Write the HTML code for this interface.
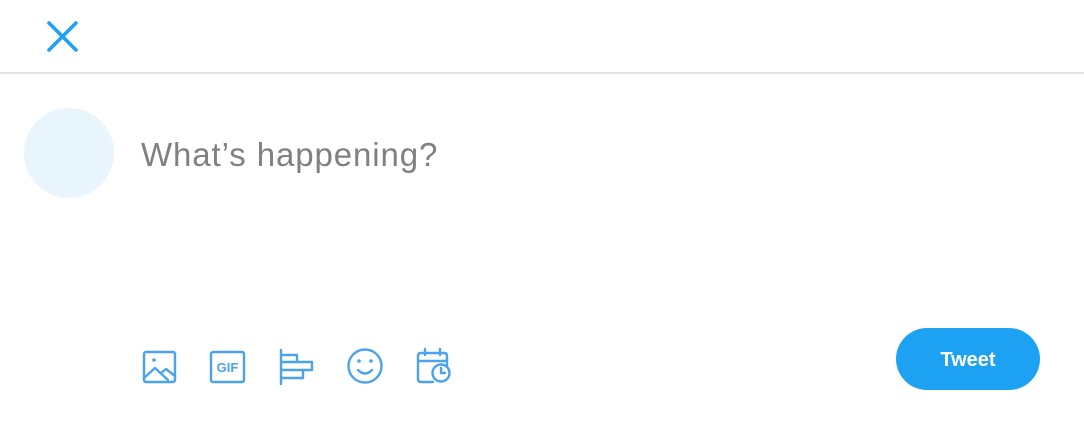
<!DOCTYPE html>
<html><head><style>
body{margin:0;width:1084px;height:428px;background:#fff;position:relative;overflow:hidden;font-family:"Liberation Sans",sans-serif}
.abs{position:absolute}
</style></head><body>
<svg class="abs" style="left:0;top:0" width="1084" height="428">
<path d="M49 23L76 50M76 23L49 50" stroke="#1da1f2" stroke-width="3.6" stroke-linecap="round"/>
<rect x="0" y="72" width="1084" height="2" fill="#e3e3e3"/>
<circle cx="69" cy="153" r="45" fill="#e8f5fd"/>
<g fill="none" stroke="#4aa3ec" stroke-width="2.4" stroke-linecap="round" stroke-linejoin="round">
<rect x="144" y="352" width="31" height="30" rx="2"/>
<circle cx="154" cy="360" r="1.8" fill="#4aa3ec" stroke="none"/>
<path d="M144 378L155 368L168 380M161 373L166 369L175 376"/>
<rect x="211" y="352" width="33" height="30" rx="2"/>
<path d="M281 350V384M281 355H297V362H281M281 362H312V370H281M281 370H303V378H281"/>
<circle cx="365" cy="366" r="16.5"/>
<path d="M358 370Q365 377 372 370"/>
<path d="M433 382H421Q418 382 418 379V356Q418 353 421 353H444Q447 353 447 356V366M418 361H447M425 349V355M440 349V355"/>
<circle cx="441" cy="373" r="8.5" fill="#fff"/>
<path d="M441 368V373H445"/>
</g>
<circle cx="359" cy="361" r="1.8" fill="#4aa3ec"/><circle cx="371" cy="361" r="1.8" fill="#4aa3ec"/>
<text x="227.5" y="372" text-anchor="middle" font-family="Liberation Sans" font-weight="bold" font-size="13" fill="#4aa3ec">GIF</text>
<text x="141" y="166" font-family="Liberation Sans" font-size="33" letter-spacing="0.9" fill="#808080">What’s happening?</text>
<rect x="896" y="328" width="144" height="62" rx="31" fill="#1da1f2"/>
<text x="968" y="366" text-anchor="middle" font-family="Liberation Sans" font-weight="bold" font-size="20" fill="#fff">Tweet</text>
</svg>
</body></html>
